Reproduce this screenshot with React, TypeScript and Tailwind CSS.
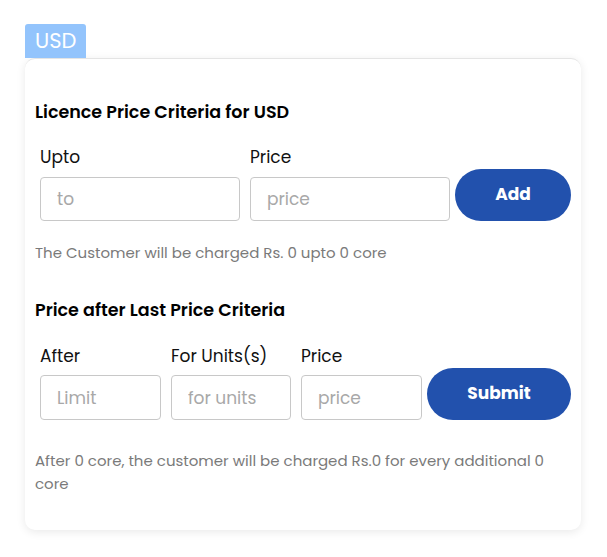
import React from "react";

const font = { fontFamily: "Poppins, Inter, 'Noto Sans', sans-serif" };

function Field({
  label,
  placeholder,
  width,
  height,
  gap,
}: {
  label: string;
  placeholder: string;
  width: string;
  height: string;
  gap: string;
}) {
  return (
    <div className="flex flex-col">
      <label className="text-[17px] leading-6 text-[#111]">{label}</label>
      <input
        placeholder={placeholder}
        className={`${width} ${height} ${gap} rounded-[4px] border border-[#c8c8c8] bg-white px-4 text-[17px] text-[#222] outline-none placeholder:text-[#a8a8a8]`}
      />
    </div>
  );
}

export default function App() {
  return (
    <div className="min-h-[557px] bg-white pl-[25px] pt-[24px]" style={font}>
      <div className="inline-flex h-[34px] items-center rounded-t-[3px] bg-[#93c4fc] px-[10px] text-[21px] text-white">
        USD
      </div>
      <div className="w-[556px] rounded-[10px] border-t border-[#e4e4e4] bg-white px-[10px] pb-[35px] pt-[41px] shadow-[0_2px_10px_rgba(0,0,0,0.09)]">
        <h2 className="text-[17.5px] font-semibold leading-6 text-black">Licence Price Criteria for USD</h2>
        <div className="mt-[21px] flex items-end pl-[5px]">
          <div className="flex gap-[10px]">
            <Field label="Upto" placeholder="to" width="w-[200px]" height="h-[44px]" gap="mt-2" />
            <Field label="Price" placeholder="price" width="w-[200px]" height="h-[44px]" gap="mt-2" />
          </div>
          <button className="ml-[5px] h-[52px] w-[116px] rounded-full bg-[#2251ad] text-[17px] font-bold text-white">
            Add
          </button>
        </div>
        <p className="mt-[22px] text-[15px] leading-5 text-[#7a7a7a]">
          The Customer will be charged Rs. 0 upto 0 core
        </p>

        <h2 className="mt-[35px] text-[17.5px] font-semibold leading-6 text-black">Price after Last Price Criteria</h2>
        <div className="mt-[22px] flex items-end pl-[5px]">
          <div className="flex gap-[10px]">
            <Field label="After" placeholder="Limit" width="w-[121px]" height="h-[45px]" gap="mt-[7px]" />
            <Field label="For Units(s)" placeholder="for units" width="w-[120px]" height="h-[45px]" gap="mt-[7px]" />
            <Field label="Price" placeholder="price" width="w-[121px]" height="h-[45px]" gap="mt-[7px]" />
          </div>
          <button className="ml-[5px] h-[52px] w-[144px] rounded-full bg-[#2251ad] text-[17px] font-bold text-white">
            Submit
          </button>
        </div>
        <p className="mt-[29px] text-[15px] leading-[23px] text-[#7a7a7a]">
          After 0 core, the customer will be charged Rs.0 for every additional 0 core
        </p>
      </div>
    </div>
  );
}
